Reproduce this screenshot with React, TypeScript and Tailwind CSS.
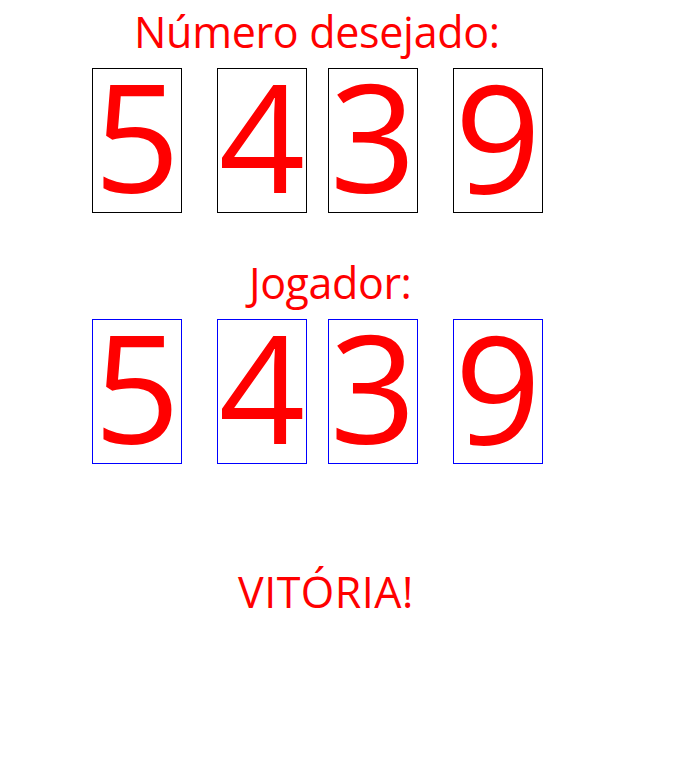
import React from "react";

const alvo = ["5", "4", "3", "9"];
const jogador = ["5", "4", "3", "9"];

// gaps between boxes aren't even in the original
const gaps = ["ml-0", "ml-[35px]", "ml-[21px]", "ml-[35px]"];

const DigitRow = ({ digits, border }: { digits: string[]; border: string }) => (
  <div className="flex pl-[92px]">
    {digits.map((d, i) => (
      <div
        key={i}
        className={`${gaps[i]} w-[90px] h-[145px] border ${border} flex justify-center items-start`}
      >
        <span className="text-[151px] leading-[131px]">{d}</span>
      </div>
    ))}
  </div>
);

export default function App() {
  return (
    <div className="w-[676px] h-[783px] bg-white font-['Open_Sans',sans-serif] text-[#ff0000]">
      {/* Numero desejado */}
      <div className="h-[68px] text-[43px] leading-[64px] tracking-[-0.3px] pl-[134px]">Número desejado:</div>
      <DigitRow digits={alvo} border="border-black" />

      {/* Jogador */}
      <div className="mt-[38px] h-[68px] text-[43px] leading-[64px] tracking-[-0.4px] pl-[249px]">Jogador:</div>
      <DigitRow digits={jogador} border="border-[#0000ff]" />

      {/* Resultado */}
      <div className="mt-[96px] text-[43px] leading-[64px] tracking-[0.5px] pl-[238px]">VITÓRIA!</div>
    </div>
  );
}
